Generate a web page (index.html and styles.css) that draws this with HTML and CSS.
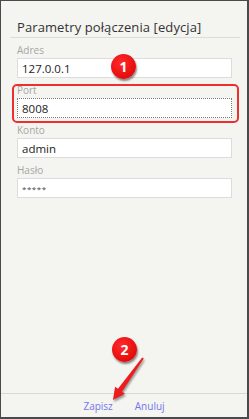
FILE: index.html
```html
<!DOCTYPE html>
<html lang="pl">
<head>
  <meta charset="UTF-8">
  <meta name="viewport" content="width=device-width, initial-scale=1.0">
  <title>Parametry połączenia</title>
  <link rel="stylesheet" href="styles.css">
</head>
<body>
  <div class="window">
    <div class="header">
      <h1>Parametry połączenia [edycja]</h1>
    </div>

    <!-- Connection fields -->
    <form class="fields">
      <div class="field">
        <label for="addr">Adres</label>
        <input id="addr" type="text" value="127.0.0.1">
      </div>
      <div class="field">
        <label for="port">Port</label>
        <input id="port" class="focused" type="text" value="8008">
      </div>
      <div class="field">
        <label for="user">Konto</label>
        <input id="user" type="text" value="admin">
      </div>
      <div class="field">
        <label for="pass">Hasło</label>
        <input id="pass" class="secret" type="text" value="*****">
      </div>
    </form>

    <div class="footer">
      <button type="button">Zapisz</button>
      <button type="button">Anuluj</button>
    </div>

    <!-- Annotations -->
    <div class="highlight"></div>
    <span class="badge b1">1</span>
    <span class="badge b2">2</span>
    <svg class="arrow" width="46" height="52" viewBox="105 353 46 52">
      <polygon points="143.8,358.6 122,391.7 124.9,393.7 113,400 115.1,386.7 118,388.7 142.2,357.4" fill="#ee1c1c"/>
    </svg>
  </div>
</body>
</html>
```

FILE: styles.css
```css
/* --- Base --- */
* {box-sizing:border-box;margin:0;padding:0}
body{font-family:"Open Sans", sans-serif;background:#fff;color:#333}

/* --- Window --- */
.window{position:relative;width:249px;height:419px;display:flex;flex-direction:column;background:#f4f4f0;border:1px solid #4a4a4a;border-right-width:2px;border-bottom-width:2px}
.header{margin:0 7px 0 9px;padding:17px 0 0 7px;border-bottom:1px solid #dcdcd8}
h1{font-size:13px;font-weight:400;line-height:19px;color:#333;letter-spacing:.1px}

/* --- Form --- */
.fields{display:grid;gap:7px;padding:7px 15px 0 16px}
.field{display:grid;gap:2px}
label{font-size:10px;line-height:11px;color:#a6a6a6}
input{height:20px;width:100%;padding:0 4px;border:1px solid #dcdcdc;background:#fff;font-family:inherit;font-size:11.5px;color:#222;outline:none}
input.focused{border:1px dotted #7a7a7a}
input.secret{font-size:8px;letter-spacing:.5px;color:#444}

/* --- Footer --- */
.footer{margin-top:auto;height:24px;border-top:1px solid #d8d8d4;display:flex;justify-content:center;align-items:center;gap:22px}
.footer button{background:none;border:none;font-family:inherit;font-size:10px;color:#7474ee;cursor:pointer}

/* --- Annotations --- */
.highlight{position:absolute;left:11px;top:83px;width:227px;height:39px;border:2px solid #ec2f2f;border-radius:5px}
.badge{position:absolute;width:25px;height:25px;border-radius:50%;background:radial-gradient(circle at 40% 35%,#ff2a2a,#d90000);color:#fff;font-size:14px;font-weight:700;line-height:25px;text-align:center;box-shadow:1px 2px 2px rgba(0,0,0,.45)}
.b1{left:110px;top:53px}
.b2{left:111px;top:336px}
.arrow{position:absolute;left:104px;top:352px;filter:drop-shadow(1px 2px 1px rgba(0,0,0,.4))}
```
